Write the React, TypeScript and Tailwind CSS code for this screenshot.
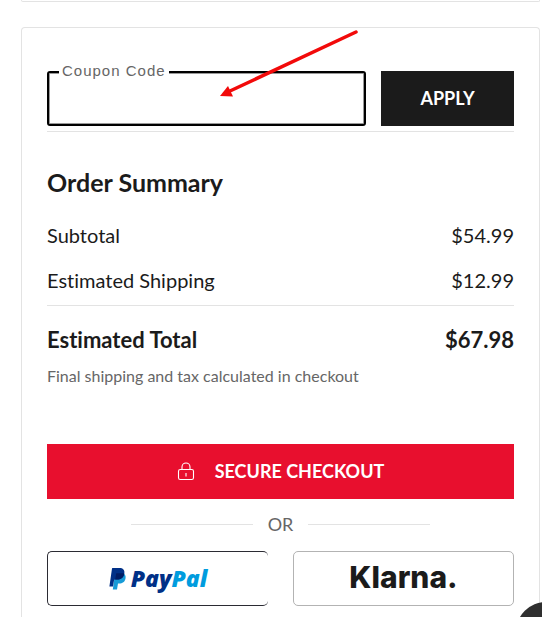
import React, { useState } from 'react';

interface SummaryRowProps {
  label: string;
  value: string;
}

function SummaryRow({ label, value }: SummaryRowProps) {
  return (
    <div className="flex items-center justify-between text-[20px] leading-[45px]">
      <dt>{label}</dt>
      <dd>{value}</dd>
    </div>
  );
}

function LockIcon() {
  return (
    <svg width="18" height="20" viewBox="0 0 18 20" fill="none" stroke="currentColor" strokeWidth="1.1" aria-hidden="true">
      <rect x="1.5" y="7.5" width="15" height="10" rx="1.8" />
      <path d="M5 7.500V5a4 4 0 0 1 8 0v2.500M9 11v3.500" />
    </svg>
  );
}

function PayPalMark() {
  return (
    <svg width="17" height="22" viewBox="0 0 17 22" aria-hidden="true">
      <path fill="#179bd7" d="M6 6h9.200c1.300 1 1.700 2.500 1.300 4.500-.7 3.600-3 5-6.300 5H9l-1 6H3.800z" />
      <path fill="#003087" d="M3.500 0h6.800c3.700 0 5.700 1.900 5 5.600-.8 4.300-3.400 6-7.200 6H5.900c-.5 0-.8.3-.9.8L4 18.600H.400L3 .600c0-.4.200-.6.500-.6z" />
      <path fill="#001c64" d="M7.200 5.200h6.500c.6 0 1 .2 1.400.4l.2.200c-.9 4.100-3.500 5.800-7.200 5.800H6.200z" />
    </svg>
  );
}

export default function App() {
  const [coupon, setCoupon] = useState('');

  return (
    <div className="relative flex min-h-screen flex-col overflow-hidden bg-white pl-[21px] pr-[2px] font-[Lato,sans-serif] text-[#1b1b1b] [font-variant-ligatures:none]">
      {/* Bottom edge of the card above */}
      <div className="h-[2px] rounded-b border border-t-0 border-[#e3e3e3]" />

      <main className="mt-[25px] flex-1 rounded-t border border-b-0 border-[#e3e3e3] px-[25px] pt-[43px]">
        <form className="flex gap-[15px] border-b border-[#e3e3e3] pb-[5px]" onSubmit={(e) => e.preventDefault()}>
          <div className="relative min-w-0 flex-1">
            <label
              htmlFor="coupon"
              className="absolute -top-[10px] left-3 bg-white px-[3px] font-['Liberation_Sans',sans-serif] text-[15px] leading-5 tracking-[1px] text-[#666666]"
            >
              Coupon Code
            </label>
            <input
              id="coupon"
              type="text"
              value={coupon}
              onChange={(e) => setCoupon(e.target.value)}
              className="h-[55px] w-full rounded-[3px] border-2 border-black px-3 text-[18px] shadow-[inset_0_0_0_1px_#999999] outline-none"
            />
          </div>
          <button type="submit" className="h-[55px] w-[133px] bg-[#1b1b1b] text-[18px] font-bold text-white">
            APPLY
          </button>
        </form>

        <h2 className="mt-[34px] text-[25px] font-bold leading-8">Order Summary</h2>

        <dl className="mt-[15px]">
          <SummaryRow label="Subtotal" value="$54.99" />
          <SummaryRow label="Estimated Shipping" value="$12.99" />
          <div className="mt-[2px] flex items-center justify-between border-t border-[#e3e3e3] pt-[18px] text-[22px] font-bold leading-8">
            <dt>Estimated Total</dt>
            <dd>$67.98</dd>
          </div>
        </dl>
        <p className="mt-2 text-[16px] leading-6 text-[#666666]">Final shipping and tax calculated in checkout</p>

        <button
          type="button"
          className="mt-14 flex h-[55px] w-full items-center justify-center gap-5 bg-[#e80f2e] text-[18px] font-bold text-white"
        >
          <LockIcon />
          <span>SECURE CHECKOUT</span>
        </button>

        <div className="flex h-[50px] items-center justify-center gap-[15px] text-[18px] text-[#666666]">
          <span className="h-px w-[26%] bg-[#e3e3e3]" />
          <span>OR</span>
          <span className="h-px w-[26%] bg-[#e3e3e3]" />
        </div>

        <div className="mt-[2px] grid grid-cols-2 gap-[25px]">
          <button
            type="button"
            aria-label="PayPal"
            className="flex h-[55px] items-center justify-center gap-[5px] rounded-[5px] border border-r-0 border-[#2b2b33]"
          >
            <PayPalMark />
            <span className="font-['Open_Sans',sans-serif] text-[23px] font-extrabold italic leading-none text-[#003087]">
              Pay<span className="text-[#009cde]">Pal</span>
            </span>
          </button>
          <button
            type="button"
            className="flex h-[55px] items-center justify-center rounded-[5px] border border-[#b3b3b3] pb-1 font-[Inter,sans-serif] text-[30px] font-extrabold leading-none"
          >
            Klarna.
          </button>
        </div>
      </main>

      {/* Hand-drawn pointer to the coupon field */}
      <svg className="pointer-events-none absolute left-[218px] top-[28px]" width="142" height="72" viewBox="0 0 142 72" aria-hidden="true">
        <path d="M138 4L12 63" stroke="#f20a0a" strokeWidth="3.500" strokeLinecap="round" />
        <path d="M2 68L10 58L15 68.500z" fill="#f20a0a" />
      </svg>

      {/* Chat launcher peeking in from the corner */}
      <button type="button" aria-label="Chat" className="absolute -bottom-[45px] -right-[34px] size-[60px] rounded-full bg-[#2f2f2f]" />
    </div>
  );
}
